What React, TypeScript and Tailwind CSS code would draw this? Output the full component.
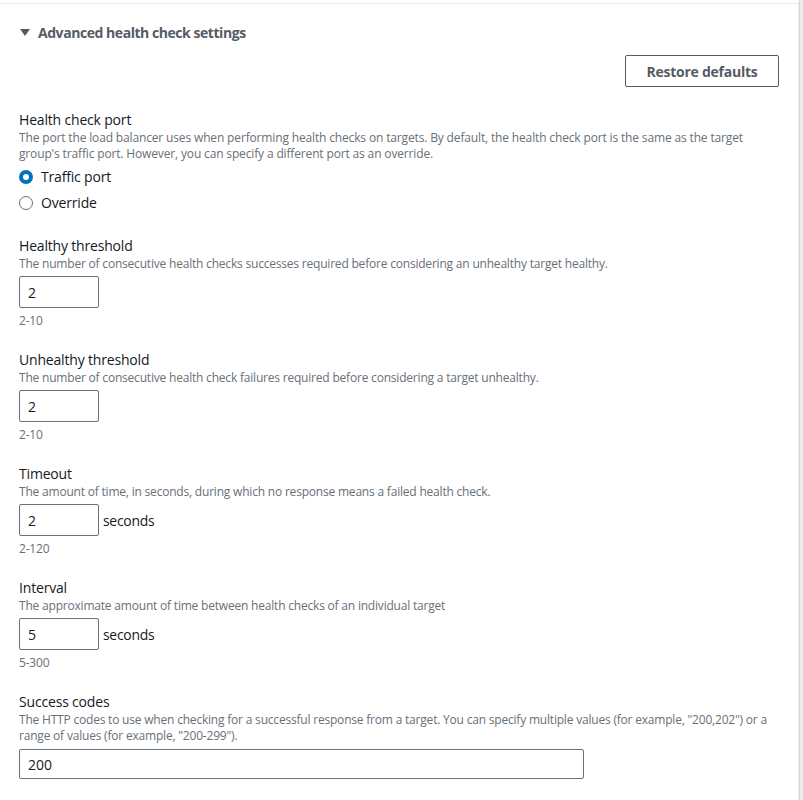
import { useState } from 'react';

const font = { fontFamily: '"Open Sans", "Noto Sans", Arial, sans-serif' };

interface FieldProps {
  label: string;
  description: React.ReactNode;
  children: React.ReactNode;
  constraint?: string;
  inputGap?: string;
}

function Field({ label, description, children, constraint, inputGap = 'mt-[4px]' }: FieldProps) {
  return (
    <div className="flex flex-col">
      <label className="text-[14px] leading-[20px] tracking-[-0.18px] text-[#16191f]">{label}</label>
      <p className="text-[12px] leading-[16px] tracking-[-0.2px] text-[#687078]">{description}</p>
      <div className={inputGap}>{children}</div>
      {constraint && (
        <p className="mt-[5px] text-[12px] leading-[16px] tracking-[-0.2px] text-[#687078]">{constraint}</p>
      )}
    </div>
  );
}

function NumberInput({ value, suffix }: { value: string; suffix?: string }) {
  return (
    <div className="flex items-center">
      <input
        type="text"
        defaultValue={value}
        className="w-[80px] h-[32px] px-[8px] border border-[#687078] rounded-[2px] text-[14px] text-[#16191f] outline-none bg-white"
        style={font}
      />
      {suffix && <span className="ml-[4px] text-[14px] tracking-[-0.3px] text-[#16191f]">{suffix}</span>}
    </div>
  );
}

function Radio({ checked, label, onClick }: { checked: boolean; label: string; onClick: () => void }) {
  return (
    <button type="button" onClick={onClick} className="flex items-center h-[20px] text-left">
      <span
        className={
          checked
            ? 'w-[14px] h-[14px] rounded-full border-[4px] border-[#0073bb] bg-white'
            : 'w-[14px] h-[14px] rounded-full border border-[#687078] bg-white'
        }
      />
      <span className="ml-[8px] text-[14px] leading-[20px] tracking-[-0.18px] text-[#16191f]">{label}</span>
    </button>
  );
}

export default function App() {
  const [port, setPort] = useState<'traffic' | 'override'>('traffic');

  return (
    <div className="flex bg-white w-[803px] h-[800px] overflow-hidden" style={font}>
      <div className="flex-1 mt-[3px] border-t border-r border-[#eaeded] px-[19px]">
        <div className="flex items-center h-[20px] mt-[19px]">
          <svg width="10" height="8" viewBox="0 0 10 8" className="ml-[1px]">
            <path d="M0 0 H10 L5 7 Z" fill="#545b64" />
          </svg>
          <h3 className="ml-[8px] text-[14px] font-bold leading-[20px] tracking-[-0.45px] text-[#545b64]">
            Advanced health check settings
          </h3>
        </div>

        <div className="flex justify-end mt-[12px]">
          <button className="w-[154px] h-[32px] border border-[#545b64] rounded-[2px] text-[14px] font-bold tracking-[-0.25px] text-[#545b64] bg-white">
            Restore defaults
          </button>
        </div>

        <div className="mt-[23px] flex flex-col">
          <label className="text-[14px] leading-[20px] tracking-[-0.18px] text-[#16191f]">Health check port</label>
          <p className="text-[12px] leading-[16px] tracking-[-0.15px] text-[#687078]">
            The port the load balancer uses when performing health checks on targets. By default, the health check port is the same as the target group's traffic port. However, you can specify a different port as an override.
          </p>
          <div className="mt-[5px] flex flex-col gap-[6px]">
            <Radio checked={port === 'traffic'} label="Traffic port" onClick={() => setPort('traffic')} />
            <Radio checked={port === 'override'} label="Override" onClick={() => setPort('override')} />
          </div>
        </div>

        <div className="mt-[23px] flex flex-col gap-[21px]">
          <Field
            label="Healthy threshold"
            description="The number of consecutive health checks successes required before considering an unhealthy target healthy."
            constraint="2-10"
          >
            <NumberInput value="2" />
          </Field>
          <Field
            label="Unhealthy threshold"
            description="The number of consecutive health check failures required before considering a target unhealthy."
            constraint="2-10"
          >
            <NumberInput value="2" />
          </Field>
          <Field
            label="Timeout"
            description="The amount of time, in seconds, during which no response means a failed health check."
            constraint="2-120"
          >
            <NumberInput value="2" suffix="seconds" />
          </Field>
          <Field
            label="Interval"
            description="The approximate amount of time between health checks of an individual target"
            constraint="5-300"
          >
            <NumberInput value="5" suffix="seconds" />
          </Field>
          <Field
            label="Success codes"
            inputGap="mt-[5px]"
            description={
              <>
                The HTTP codes to use when checking for a successful response from a target. You can specify multiple values (for example, "200,202") or a range of values (for example, "200-299").
              </>
            }
          >
            <input
              type="text"
              defaultValue="200"
              className="w-[565px] h-[30px] px-[8px] border border-[#687078] rounded-[2px] text-[14px] text-[#16191f] outline-none bg-white"
              style={font}
            />
          </Field>
        </div>
      </div>
      <div className="w-[4px] bg-[#eaeded] border-l border-[#d5dbdb]" />
    </div>
  );
}
